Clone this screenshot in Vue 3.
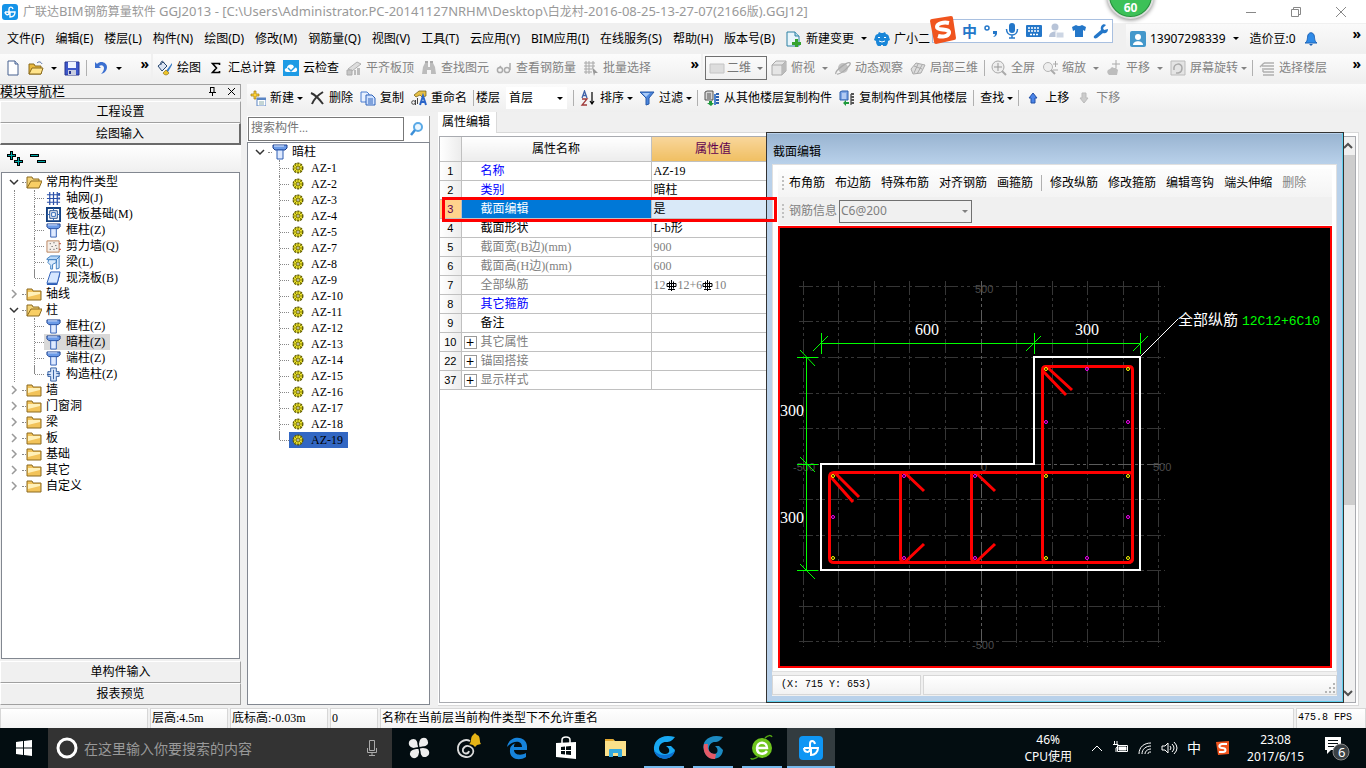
<script setup>
import { ref } from 'vue';

const title = '广联达BIM钢筋算量软件 GGJ2013 - [C:\\Users\\Administrator.PC-20141127NRHM\\Desktop\\白龙村-2016-08-25-13-27-07(2166版).GGJ12]';

// Chinese runs are set one size smaller than the Latin ones
const titleParts = title.split(/([\u4e00-\u9fa5]+)/).filter(Boolean);

const menus = ['文件(F)', '编辑(E)', '楼层(L)', '构件(N)', '绘图(D)', '修改(M)', '钢筋量(Q)', '视图(V)', '工具(T)',
    '云应用(Y)', 'BIM应用(I)', '在线服务(S)', '帮助(H)', '版本号(B)'];

// 16x16 icon bodies
const icons = {
    logo: '<rect width="16" height="16" rx="3" fill="#1593e8"/><path d="M11 5C10 2 7 3 7 5v4c0 3-4 2-4-1M3 8h10c0 3-2 5-5 5V8" fill="none" stroke="#fff" stroke-width="1.4"/>',
    file: '<path d="M3 1h7l3 3v11H3z" fill="#fff" stroke="#46608f"/><path d="M10 1v3h3" fill="#cfdcf0" stroke="#46608f"/>',
    open: '<path d="M1 14V4h5l1 2h6v8z" fill="#e9b93e" stroke="#8a6a1c"/><path d="M1 14l3-6h11l-2 6z" fill="#ffe48c" stroke="#8a6a1c"/><path d="M9 3c2-2 4-1 5 1" fill="none" stroke="#47639c"/>',
    save: '<path d="M1 2h14v13H1z" fill="#3d57c9" stroke="#27348f"/><path d="M4 2h8v6H4z" fill="#eef2ff"/><path d="M4 10h8v5H4z" fill="#c8cde0"/><path d="M5 11h2v3H5z" fill="#27348f"/>',
    undo: '<path d="M2 2v6h6L6 6c3-2 5 0 5 2s-1 4-3 6c4-1 6-4 6-7 0-4-6-7-10-3z" fill="#3b6fd0"/>',
    draw: '<path d="M1 6l5-4 4 4-5 5z" fill="#dbe4f2" stroke="#27466f"/><path d="M4 5c-1-4 2-5 3-2" fill="none" stroke="#27466f"/><path d="M15 3L9 11l2 1 4-7z" fill="#3d7fc8"/><path d="M9 10l-3 3c1 2 4 3 6 0z" fill="#edc42b" stroke="#7d6410" stroke-width=".6"/>',
    sum: '<path d="M11.500 5V3.500H4.500l4 4.500-4 4.500h7V11" fill="none" stroke="#000" stroke-width="1.600"/>',
    cloud: '<rect width="16" height="16" fill="#1e9be5"/><path d="M4 12c-3 0-3-4 0-4 0-4 6-5 7-1 4 0 4 5 1 5z" fill="#fff"/><path d="M5 8l3 3 5-5" fill="none" stroke="#1e9be5" stroke-width="1.5"/>',
    slab: '<path d="M2 9l9-7 4 2-9 7z" fill="#ddd" stroke="#b0b0b0"/><path d="M1 10h5v5H1z" fill="#c6c6c6" stroke="#aaa"/><path d="M8 10h2v5H8zM11 8h3v7h-3z" fill="#bbb"/>',
    find: '<path d="M1 14l1-7 2-4h3v4h2V3h3l2 4 1 7h-5v-4H6v4z" fill="#bcbcbc"/><path d="M4 1h3v2H4zM9 1h3v2H9z" fill="#a9a9a9"/>',
    glass: '<circle cx="4" cy="10" r="2.6" fill="none" stroke="#aaa" stroke-width="1.5"/><circle cx="11" cy="10" r="2.6" fill="none" stroke="#aaa" stroke-width="1.5"/><path d="M5 6L3 8M14 3v7" stroke="#aaa" stroke-width="1.5"/>',
    batch: '<path d="M1 3h11M1 6h11M1 9h8M1 12h8M3 1v13M6 1v13M10 1v7" stroke="#a8a8a8"/><path d="M9 7l6 6h-3l-1 3z" fill="#999"/>',
    rect: '<path d="M1 4h14v9H1z" fill="#ddd" stroke="#c4c4c4"/>',
    cube: '<path d="M1 5l4-4h10v10l-4 4H1z" fill="#e5e5e5" stroke="#aaa"/><path d="M1 5h10v10M11 5l4-4" fill="none" stroke="#aaa"/><path d="M11 5l4-4v10l-4 4z" fill="#bbb"/>',
    orbit: '<circle cx="8" cy="8" r="5" fill="#c2c2c2"/><path d="M1 14C-1 11 13 1 15 3S5 15 2 14" fill="none" stroke="#aaa" stroke-width="1.3"/>',
    part: '<path d="M1 9l5-6 9 2-4 8-8 1z" fill="#ddd" stroke="#aaa"/><path d="M4 6l8 3M8 4l-4 9M12 5l-5 9" stroke="#aaa"/>',
    full: '<circle cx="7" cy="7" r="6" fill="#eee" stroke="#aaa"/><path d="M7 3v8M3 7h8" stroke="#999"/><path d="M11 11l4 4" stroke="#aaa" stroke-width="2"/>',
    zoom: '<circle cx="6" cy="7" r="4.5" fill="#eee" stroke="#b5b5b5"/><path d="M9 10l4 4" stroke="#aaa" stroke-width="2"/><path d="M11 4h5M13.500 1v6M11 10h5" stroke="#aaa"/>',
    pan: '<path d="M3 15c-4-4 0-6 1-6l2-2 2 1 2 0 2 2-1 5z" fill="#bdbdbd"/><path d="M10 0v8M6 4h8" stroke="#aaa"/>',
    rotate: '<path d="M1 1h14v14H1z" fill="#e4e4e4" stroke="#bbb"/><path d="M4 10c-1-7 8-8 8-2s-6 5-6 5" fill="none" stroke="#aaa" stroke-width="1.5"/>',
    floors: '<path d="M5 3h10M3 6h12M5 9h10M4 12h11M4 15h11M5 3L1 7M4 12V8" stroke="#b0b0b0" stroke-width="1.4"/>',
    create: '<path d="M4 1h2v3h3v2H6v3H4V6H1V4h3z" fill="#ffd33a" stroke="#9b7a10" stroke-width=".7"/><path d="M7 8h9v8H7z" fill="#fff" stroke="#5a85c4"/><path d="M7 8h9v2H7z" fill="#5a85c4"/><path d="M9 12h5M9 14h5" stroke="#8aa"/>',
    cross: '<path d="M2 3c5 2 9 7 12 11M14 2C9 5 5 9 3 14" fill="none" stroke="#333" stroke-width="2"/>',
    copy: '<path d="M1 2h6l2 2v8H1z" fill="#e7f0ff" stroke="#4a7dd0"/><path d="M6 5h6l3 3v7H6z" fill="#cfe1ff" stroke="#2e63b8"/><path d="M8 9h5M8 11h5M8 13h5" stroke="#2e63b8"/>',
    rename: '<path d="M3 5l5-4h7v5l-4 1-2-2-4 2z" fill="#e6c045" stroke="#6b570f" stroke-width=".7"/><path d="M9 15l3-9 3 9M10 12h4" fill="none" stroke="#2b65c8" stroke-width="2"/><circle cx="2.500" cy="12.500" r="1.800" fill="none" stroke="#444"/><path d="M4.500 10v5M6.500 8v6" fill="none" stroke="#444"/>',
    sort: '<path d="M2 8l2.500-7L7 8M3 5.500h3" fill="none" stroke="#3f62a8" stroke-width="1.300"/><path d="M2 9h5l-5 6h5" fill="none" stroke="#a03a3a" stroke-width="1.300"/><path d="M12 2v11M10 11l2 3 2-3" fill="none" stroke="#000" stroke-width="1.200"/>',
    filter: '<path d="M1 2h14l-5 6v6l-3 1V8z" fill="#4b86dd" stroke="#2759a8"/><path d="M3 3h8L7 7z" fill="#a9cbf8"/>',
    fromFloor: '<path d="M1 2l2-1h6v9H1z" fill="#d5d5d5" stroke="#555"/><path d="M3 4h4M3 6h4M3 8h4" stroke="#555"/><path d="M5 11h3v2h2l-3 3-4-3h2z" fill="#1e9a3b"/><path d="M11 4v11" stroke="#4b83d0" stroke-width="2"/><path d="M12 4h3M12 7h3M12 10h3M12 13h3" stroke="#2e60ac" stroke-width="2"/>',
    toFloor: '<path d="M1 2l2-1h6v9H1z" fill="#7ea6e6" stroke="#2e60ac"/><path d="M3 4h4M3 6h4M3 8h4" stroke="#e6efff"/><path d="M4 13l3-3v2h3v2H7v2z" fill="#1e9a3b"/><path d="M12 4v11" stroke="#888" stroke-width="2"/><path d="M12 4h3M12 7h3M12 10h3M12 13h3" stroke="#555" stroke-width="2"/>',
    up: '<path d="M8 3l4 5h-2v5H6V8H4z" fill="#4a84e8" stroke="#2350a5"/>',
    down: '<path d="M8 13l4-5h-2V3H6v5H4z" fill="#ccc" stroke="#bbb"/>',
    change: '<path d="M1 1h8l4 4v10H1z" fill="#e8f5fb" stroke="#2c80a3"/><path d="M9 1v4h4" fill="#b5dcea" stroke="#2c80a3"/><path d="M9 8h3v3h3v3h-3v2H9v-2H6v-3h3z" fill="#35a32f"/>',
    robot: '<path d="M1 6c0-2 2-3 3-3l1-2 2 1h2l2-1 1 2c1 0 3 1 3 3l1 3-2 1c0 3-1 4-2 5h-3v-1H7v1H4c-1-1-2-2-2-5L0 9z" fill="#1986d8"/><path d="M4 7q1-2 2 0M10 7q1-2 2 0M5 10q3 2 6 0" stroke="#fff" fill="none"/>',
    user: '<rect width="16" height="16" rx="2" fill="#4498cb"/><circle cx="8" cy="6" r="3" fill="#fff"/><path d="M3 14c0-5 10-5 10 0z" fill="#fff"/>',
    bell: '<path d="M2 12c3-2 2-5 3-8 1-3 5-3 6 0 1 3 0 6 3 8z" fill="#2f8be8" stroke="#1d62b5"/><path d="M6 13h4l-2 2z" fill="#1d62b5"/>',
    folder: '<path d="M1 3h5l1 2h8v9H1z" fill="#f2c35a" stroke="#8c6b20"/><path d="M2 6h12v2L2 11z" fill="#fff0b8"/>',
    folderOpen: '<path d="M1 14V3h5l1 2h6v3" fill="#f4d479" stroke="#8c6b20"/><path d="M1 14l4-7h11l-3 7z" fill="#f8ce64" stroke="#8c6b20"/>',
    grid: '<path d="M1 4h14M1 8h12M1 12h14M4 1v14M8 1v14M12 1v14" stroke="#2a4fa8" stroke-width="1.300"/><path d="M13 2h2v3h-2zM13 7h2v2h-2z" fill="#2a4fa8"/>',
    raft: '<path d="M1 1h14v14H1z" fill="#fff" stroke="#123f80" stroke-width="2"/><path d="M4 4h8v8H4z" fill="none" stroke="#123f80"/><path d="M6 6h4v4H6zM8 1v3M8 12v3M1 8h3M12 8h3" fill="none" stroke="#2a63b4"/>',
    column: '<path d="M1 1h14v3l-2 2H3L1 4z" fill="#6b9be8" stroke="#1d3f8b"/><path d="M5 6h6v9H5z" fill="#dfeaff" stroke="#2d5cb3"/><path d="M2 2h10" stroke="#dfeaff"/>',
    wall: '<path d="M1 2h13v12H1z" fill="#f5efe9" stroke="#b9825a"/><path d="M4 5h1M8 4h1M6 8h1M10 7h1M4 11h1M8 11h1M11 10h1" stroke="#333"/><path d="M14 5h2M14 11h2" stroke="#c0392b"/>',
    beam: '<path d="M1 4l4-3h10l-4 4H1z" fill="#b7d7f7" stroke="#3f7fc0"/><path d="M3 5l8 0v3l-4 2v5H5v-4L2 8zM11 5l3-3v12l-3 1z" fill="#d9ebfd" stroke="#3f7fc0"/>',
    slabBlue: '<path d="M5 1h10l-3 12H1z" fill="#d6e7ff" stroke="#2b5db8"/><path d="M1 13h11l3-12v3l-3 11H1z" fill="#2b5db8"/>',
    tie: '<path d="M2 5h3V1h6v4h3v5h-3v5H5v-5H2z" fill="#d9e6fa" stroke="#2d5a9e"/><path d="M8 3v10M11 7h4M1 8h4" stroke="#2d5a9e"/>',
    gear: '<circle cx="8" cy="8" r="5.500" fill="#eee52a" stroke="#5c5800" stroke-width="1.500" stroke-dasharray="2.500 1"/><path d="M8 3v10M3 8h10M4.500 4.500l7 7M11.500 4.500l-7 7" stroke="#5c5800" stroke-width=".8"/><circle cx="8" cy="8" r="1.500" fill="#fff" stroke="#5c5800" stroke-width=".8"/>'
};

const drawTools = [
    { text: '绘图', icon: 'draw' },
    { text: '汇总计算', icon: 'sum' },
    { text: '云检查', icon: 'cloud' },
    { text: '平齐板顶', icon: 'slab', off: true },
    { text: '查找图元', icon: 'find', off: true },
    { text: '查看钢筋量', icon: 'glass', off: true },
    { text: '批量选择', icon: 'batch', off: true }
];

const viewTools = [
    { text: '俯视', icon: 'cube', arrow: true },
    { text: '动态观察', icon: 'orbit' },
    { text: '局部三维', icon: 'part', sep: true },
    { text: '全屏', icon: 'full' },
    { text: '缩放', icon: 'zoom', arrow: true },
    { text: '平移', icon: 'pan', arrow: true },
    { text: '屏幕旋转', icon: 'rotate', arrow: true, tight: true, sep: true },
    { text: '选择楼层', icon: 'floors' }
];

const componentTools = [
    { text: '新建', icon: 'create', arrow: true },
    { text: '删除', icon: 'cross' },
    { text: '复制', icon: 'copy' },
    { text: '重命名', icon: 'rename', sep: true }
];

const floorTools = [
    { text: '排序', icon: 'sort', arrow: true },
    { text: '过滤', icon: 'filter', arrow: true, sep: true },
    { text: '从其他楼层复制构件', icon: 'fromFloor' },
    { text: '复制构件到其他楼层', icon: 'toFloor', sep: true },
    { text: '查找', arrow: true, sep: true },
    { text: '上移', icon: 'up' },
    { text: '下移', icon: 'down', off: true }
];

const navTree = ref([
    {
        text: '常用构件类型', open: true, children: [
            { text: '轴网(J)', icon: 'grid' },
            { text: '筏板基础(M)', icon: 'raft' },
            { text: '框柱(Z)', icon: 'column' },
            { text: '剪力墙(Q)', icon: 'wall' },
            { text: '梁(L)', icon: 'beam' },
            { text: '现浇板(B)', icon: 'slabBlue' }
        ]
    },
    { text: '轴线' },
    {
        text: '柱', open: true, children: [
            { text: '框柱(Z)', icon: 'column' },
            { text: '暗柱(Z)', icon: 'column', active: true },
            { text: '端柱(Z)', icon: 'column' },
            { text: '构造柱(Z)', icon: 'tie' }
        ]
    },
    { text: '墙' },
    { text: '门窗洞' },
    { text: '梁' },
    { text: '板' },
    { text: '基础' },
    { text: '其它' },
    { text: '自定义' }
]);

const components = [1, 2, 3, 4, 5, 7, 8, 9, 10, 11, 12, 13, 14, 15, 16, 17, 18, 19].map(n => `AZ-${n}`);
const selected = ref('AZ-19');

const properties = [
    { no: 1, name: '名称', value: 'AZ-19', kind: 'key' },
    { no: 2, name: '类别', value: '暗柱', kind: 'key' },
    { no: 3, name: '截面编辑', value: '是', kind: 'current' },
    { no: 4, name: '截面形状', value: 'L-b形', kind: '' },
    { no: 5, name: '截面宽(B边)(mm)', value: '900', kind: 'dim' },
    { no: 6, name: '截面高(H边)(mm)', value: '600', kind: 'dim' },
    { no: 7, name: '全部纵筋', bars: ['12', '12+6', '10'], kind: 'dim' },
    { no: 8, name: '其它箍筋', value: '', kind: 'key' },
    { no: 9, name: '备注', value: '', kind: '' },
    { no: 10, name: '其它属性', value: '', kind: 'dim', group: true },
    { no: 22, name: '锚固搭接', value: '', kind: 'dim', group: true },
    { no: 37, name: '显示样式', value: '', kind: 'dim', group: true }
];

const barTools = ['布角筋', '布边筋', '特殊布筋', '对齐钢筋', '画箍筋'];
const editTools = ['修改纵筋', '修改箍筋', '编辑弯钩', '端头伸缩'];

// Section drawing
const gridX = [803, 838, 874, 909, 945, 1016, 1052, 1087, 1123, 1158];
const gridY = [286, 321, 357, 393, 428, 499, 535, 570, 606, 641];
const cornerBars = [[1046, 369], [1128, 369], [833, 476], [1046, 476], [1128, 476], [833, 558], [1046, 558], [1128, 558]];
const sideBars = [[1087, 369], [1046, 422], [1128, 422], [904, 476], [975, 476], [833, 517], [1128, 517], [904, 558], [975, 558], [1087, 558]];
</script>

<template>
    <div class="app">
        <header class="titlebar">
            <svg class="ico" viewBox="0 0 16 16" v-html="icons.logo" />
            <h1><span v-for="(p, i) in titleParts" :key="i" :class="{ han: /[\u4e00-\u9fa5]/.test(p) }">{{ p }}</span></h1>
            <div class="window-buttons">
                <button><svg viewBox="0 0 10 10"><path d="M0 5.500h10" /></svg></button>
                <button><svg viewBox="0 0 10 10"><path d="M.5 2.500h7v7h-7zM2.500 2.500v-2h7v7h-2" /></svg></button>
                <button><svg viewBox="0 0 10 10"><path d="M0 0l10 10M10 0L0 10" /></svg></button>
            </div>
        </header>

        <nav class="menubar">
            <button v-for="m in menus" :key="m">{{ m }}</button>
            <button class="tool"><svg class="ico" viewBox="0 0 16 16" v-html="icons.change" />新建变更<i class="arrow" /></button>
            <button class="tool"><svg class="ico" viewBox="0 0 16 16" v-html="icons.robot" />广小二</button>
            <div class="account">
                <button class="tool"><svg class="ico" viewBox="0 0 16 16" v-html="icons.user" />13907298339<i class="arrow" /></button>
                <button class="tool beans">造价豆:0<svg class="ico" viewBox="0 0 16 16" v-html="icons.bell" /></button>
                <button class="more">»</button>
            </div>
        </nav>

        <div class="toolbars">
            <div class="strip file-strip">
                <button><svg class="ico" viewBox="0 0 16 16" v-html="icons.file" /></button>
                <button class="tool"><svg class="ico" viewBox="0 0 16 16" v-html="icons.open" /><i class="arrow" /></button>
                <button><svg class="ico" viewBox="0 0 16 16" v-html="icons.save" /></button>
                <i class="sep" />
                <button class="tool"><svg class="ico" viewBox="0 0 16 16" v-html="icons.undo" /><i class="arrow" /></button>
                <button class="more">»</button>
            </div>
            <div class="strip draw-strip">
                <button v-for="t in drawTools" :key="t.text" class="tool" :class="{ off: t.off }">
                    <svg class="ico" viewBox="0 0 16 16" v-html="icons[t.icon]" />{{ t.text }}
                </button>
                <button class="more">»</button>
            </div>
            <div class="strip view-strip">
                <label class="mode">
                    <svg class="ico" viewBox="0 0 16 16" v-html="icons.rect" />
                    <select aria-label="二维"><option>二维</option></select>
                    <i class="arrow" />
                </label>
                <template v-for="t in viewTools" :key="t.text">
                    <button class="tool off">
                        <svg class="ico" viewBox="0 0 16 16" v-html="icons[t.icon]" />{{ t.text }}<i v-if="t.arrow" class="arrow" :class="{ tight: t.tight }" />
                    </button>
                    <i v-if="t.sep" class="sep" />
                </template>
                <button class="more">»</button>
            </div>
        </div>

        <main class="workspace">
            <aside class="navigator">
                <div class="nav-title"><span>模块导航栏</span>
                    <svg viewBox="0 0 9 9"><path d="M2.500 0v5M1 5.500h7M6 0v5M2 .5h4M4.500 5v4" /></svg>
                    <svg viewBox="0 0 9 9"><path d="M1 1l7 7M8 1L1 8" /></svg>
                </div>
                <button class="section">工程设置</button>
                <button class="section pressed">绘图输入</button>
                <div class="nav-tools">
                    <button><svg width="17" height="16" viewBox="0 0 17 16"><path d="M0 4.500h9M4.500 0v9M7 10.500h9M11.500 6v9" stroke="#000" stroke-width="3" /><path d="M1 4.500h7M4.500 1v7M8 10.500h7M11.500 7v7" stroke="#0aa" /></svg></button>
                    <button><svg width="17" height="16" viewBox="0 0 17 16"><path d="M0 4.500h9M7 10.500h9" stroke="#000" stroke-width="3" /><path d="M1 4.500h7M8 10.500h7" stroke="#0aa" /></svg></button>
                </div>
                <ul class="tree nav-tree">
                    <li v-for="g in navTree" :key="g.text" :class="{ open: g.open }">
                        <button class="node" @click="g.open = !g.open">
                            <svg class="chevron" viewBox="0 0 10 10"><path :d="g.open ? 'M1 3l4 4 4-4' : 'M3 1l4 4-4 4'" /></svg>
                            <i class="stub" />
                            <svg class="ico" viewBox="0 0 16 16" v-html="g.open ? icons.folderOpen : icons.folder" />
                            <span>{{ g.text }}</span>
                        </button>
                        <ul v-if="g.open && g.children">
                            <li v-for="c in g.children" :key="c.text">
                                <button class="leaf" :class="{ active: c.active }">
                                    <svg class="ico" viewBox="0 0 16 16" v-html="icons[c.icon]" />
                                    <span>{{ c.text }}</span>
                                </button>
                            </li>
                        </ul>
                    </li>
                </ul>
                <button class="section">单构件输入</button>
                <button class="section">报表预览</button>
            </aside>

            <div class="editor">
                <div class="strip component-strip">
                    <template v-for="t in componentTools" :key="t.text">
                        <button class="tool">
                            <svg class="ico" viewBox="0 0 16 16" v-html="icons[t.icon]" />{{ t.text }}<i v-if="t.arrow" class="arrow tight" />
                        </button>
                        <i v-if="t.sep" class="sep" />
                    </template>
                    <label class="floor">楼层
                        <span class="floor-box"><select><option>首层</option></select><i class="arrow" /></span>
                    </label>
                    <i class="sep" />
                    <template v-for="t in floorTools" :key="t.text">
                        <button class="tool" :class="{ off: t.off }">
                            <svg v-if="t.icon" class="ico" viewBox="0 0 16 16" v-html="icons[t.icon]" />{{ t.text }}<i v-if="t.arrow" class="arrow tight" />
                        </button>
                        <i v-if="t.sep" class="sep" />
                    </template>
                </div>

                <div class="panes">
                    <section class="components">
                        <div class="search">
                            <input type="text" placeholder="搜索构件..." aria-label="搜索构件" />
                            <button><svg class="ico" viewBox="0 0 16 16"><circle cx="9" cy="6" r="4" fill="#eaf6ff" stroke="#5aa9e6" stroke-width="2" /><path d="M6 9l-4 5" stroke="#3c8fd8" stroke-width="2.500" /></svg></button>
                        </div>
                        <ul class="tree component-tree">
                            <li>
                                <button class="node">
                                    <svg class="chevron" viewBox="0 0 10 10"><path d="M1 3l4 4 4-4" /></svg>
                                    <i class="stub" />
                                    <svg class="ico" viewBox="0 0 16 16" v-html="icons.column" />
                                    <span>暗柱</span>
                                </button>
                                <ul>
                                    <li v-for="c in components" :key="c">
                                        <button class="leaf" :class="{ chosen: c === selected }" @click="selected = c">
                                            <svg class="ico" viewBox="0 0 16 16" v-html="icons.gear" />
                                            <span>{{ c }}</span>
                                        </button>
                                    </li>
                                </ul>
                            </li>
                        </ul>
                    </section>

                    <section class="properties">
                        <button class="tab">属性编辑</button>
                        <div class="sheet">
                            <div class="table-box">
                                <table>
                                    <thead>
                                        <tr><th class="no"></th><th class="name">属性名称</th><th class="value">属性值</th><th></th></tr>
                                    </thead>
                                    <tbody>
                                        <tr v-for="p in properties" :key="p.no" :class="p.kind">
                                            <td class="no">{{ p.no }}</td>
                                            <td class="name"><button v-if="p.group" class="expand">+</button>{{ p.name }}</td>
                                            <td class="value">
                                                <template v-if="p.bars">
                                                    <template v-for="(b, i) in p.bars" :key="i">
                                                        <svg v-if="i" class="rebar" viewBox="0 0 11 11"><path d="M5.500 0v11M2 9.500h7M1 3.500h9v3H1zM3.500 1.500v7M7.500 1.500v7" /></svg>{{ b }}
                                                    </template>
                                                </template>
                                                <template v-else>{{ p.value }}</template>
                                            </td>
                                            <td></td>
                                        </tr>
                                    </tbody>
                                </table>
                                <div class="scrollbar">
                                    <svg viewBox="0 0 10 10"><path d="M1 7l4-4 4 4" /></svg>
                                    <i class="thumb" />
                                    <svg viewBox="0 0 10 10"><path d="M1 3l4 4 4-4" /></svg>
                                </div>
                            </div>
                        </div>

                        <div class="dialog">
                            <h2>截面编辑</h2>
                            <div class="dialog-body">
                                <div class="dialog-tools">
                                    <i class="grip" />
                                    <button v-for="t in barTools" :key="t">{{ t }}</button>
                                    <i class="sep" />
                                    <button v-for="t in editTools" :key="t">{{ t }}</button>
                                    <button class="off">删除</button>
                                </div>
                                <div class="dialog-tools info">
                                    <i class="grip" />
                                    <label for="rebar">钢筋信息</label>
                                    <span class="combo"><select id="rebar"><option>C6@200</option></select><i class="arrow" /></span>
                                </div>
                                <div class="canvas">
                                    <svg width="550" height="438" viewBox="780 228 550 438">
                                        <g class="grid">
                                            <path v-for="x in gridX" :key="'x' + x" :d="`M${x}.5 281V647`" />
                                            <path v-for="y in gridY" :key="'y' + y" :d="`M799 ${y}.5H1165`" />
                                            <path class="axis" d="M981.500 281V647M799 464.500H1165" />
                                        </g>
                                        <g class="scale">
                                            <text x="975" y="293">500</text>
                                            <text x="972" y="649">-500</text>
                                            <text x="981" y="471">0</text>
                                            <text x="1153" y="471">500</text>
                                            <text x="793" y="471">-500</text>
                                        </g>
                                        <g class="dims">
                                            <path d="M821 343.500H1140M821.500 333v21M1034.500 333v21M1140.500 333v21M813 351l15-15M1026 351l15-15M1133 351l15-15" />
                                            <path d="M806.500 357V570M797 357.500h21M797 464.500h21M797 570.500h21M800 350l15 16M800 457l15 15M800 564l15 15" />
                                        </g>
                                        <path class="outline" d="M821 464H1034V357H1140V570H821z" />
                                        <path class="leader" d="M1141 356L1178 319" />
                                        <g class="stirrup">
                                            <path d="M1042.500 558V370q0-3.500 3.500-3.500h83q3.500 0 3.500 3.500v188q0 4.500-4.500 4.500h-81q-4 0-4.500-4.500" />
                                            <path d="M829.500 558V477q0-4.500 4.500-4.500h296q2.500 0 2.500 4.500v81q0 4.500-4.500 4.500H834q-4.500 0-4.500-4.500" />
                                            <path d="M900.500 474v85q1 3 4 3M971.500 474v85q1 3 4 3" />
                                            <path d="M830 476l23 26M835 473l24 24M1043 371l23 24M1047 367l25 23" />
                                            <path d="M905 473l19 18M905 562l19-18M976 473l19 18M976 562l19-18" />
                                        </g>
                                        <circle v-for="(b, i) in cornerBars" :key="'c' + i" class="corner-bar" :cx="b[0]" :cy="b[1]" r="1.500" />
                                        <circle v-for="(b, i) in sideBars" :key="'s' + i" class="side-bar" :cx="b[0]" :cy="b[1]" r="1.500" />
                                        <g class="labels">
                                            <text x="915" y="335">600</text>
                                            <text x="1075" y="335">300</text>
                                            <text x="780" y="416">300</text>
                                            <text x="780" y="523">300</text>
                                            <text class="cjk" x="1178" y="325">全部纵筋</text>
                                            <text class="green" x="1242" y="325">12C12+6C10</text>
                                        </g>
                                    </svg>
                                </div>
                            </div>
                            <div class="dialog-status">
                                <span class="coords">(X: 715 Y: 653)</span>
                                <span class="rest"><svg width="11" height="11" viewBox="0 0 11 11"><path d="M8 0h2v2H8zM4 4h2v2H4zM8 4h2v2H8zM0 8h2v2H0zM4 8h2v2H4zM8 8h2v2H8z" fill="#b5b5b5" /></svg></span>
                            </div>
                        </div>
                        <div class="marker" />
                    </section>
                </div>
            </div>
        </main>

        <footer class="statusbar">
            <span class="blank"></span>
            <span class="height">层高:4.5m</span>
            <span class="base">底标高:-0.03m</span>
            <span class="count">0</span>
            <span class="hint">名称在当前层当前构件类型下不允许重名</span>
            <span class="fps">475.8 FPS</span>
        </footer>

        <div class="taskbar">
            <button class="start"><svg width="16" height="16" viewBox="0 0 16 16"><path d="M0 2l7-1v6.500H0zM8 1l8-1v7.500H8zM0 8.500h7V15l-7-1zM8 8.500h8V16l-8-1z" fill="#fff" /></svg></button>
            <div class="cortana">
                <svg width="22" height="22" viewBox="0 0 22 22"><circle cx="11" cy="11" r="9" fill="none" stroke="#fff" stroke-width="3" /></svg>
                <input type="text" placeholder="在这里输入你要搜索的内容" aria-label="在这里输入你要搜索的内容" />
                <svg width="12" height="18" viewBox="0 0 12 18"><path d="M3.500 1.500h5v10h-5zM1.500 9v4.500h9V9M6 13.500V17M3 16.500h6" fill="none" stroke="#aaa" /></svg>
            </div>
            <div class="apps">
                <button><svg viewBox="0 0 24 24"><g fill="#eee" stroke="#030d11" stroke-width="1.500"><path d="M12 12C7 14 1 12 1 7c0-4 5-6 8-4 2 2 3 5 3 9z" /><path d="M12 12c-2-5 0-11 5-11 4 0 6 5 4 8-2 2-5 3-9 3z" /><path d="M12 12c5-2 11 0 11 5 0 4-5 6-8 4-2-2-3-5-3-9z" /><path d="M12 12c2 5 0 11-5 11-4 0-6-5-4-8 2-2 5-3 9-3z" /></g></svg></button>
                <button><svg viewBox="0 0 24 24"><path d="M14 5C8 2 1 7 2 14s12 10 15 3c2-6-7-10-10-4-1 5 5 6 6 2" fill="none" stroke="#ddd" stroke-width="1.800" /><path d="M13 8c3-1 1-7 4-9l2-2 2 2c4 1 2 7 4 9l-4 1-2 2-2-2z" fill="#e6b416" /></svg></button>
                <button><svg viewBox="0 0 24 24"><path d="M2 11C4-1 21-1 22 10v4H9c0 5 7 6 12 3v4C13 26 4 22 5 14c0-4 3-6 6-7-2 1-2 2-2 4h8c0-7-9-7-15 0z" fill="#1683dc" /></svg></button>
                <button><svg viewBox="0 0 24 24"><path d="M8 7V4c0-4 8-4 8 0v3" fill="none" stroke="#fff" stroke-width="1.500" /><path d="M2 7l20-1v17L2 21z" fill="#fff" /><path d="M7 11l4-.5V14H7zM12 10.500l5-.5v4h-5zM7 15h4v3.500L7 18zM12 15h5v4l-5-.5z" fill="#030d11" /></svg></button>
                <button><svg viewBox="0 0 24 24"><path d="M2 3h8l2 2h11v15H2z" fill="#fbe08a" /><path d="M2 3h8l1 2H2z" fill="#e3a82f" /><path d="M6 21v-7q0-1 1-1h11q1 0 1 1v7h-4v-4h-5v4z" fill="#35a9dd" /></svg></button>
                <button class="running"><svg viewBox="0 0 24 24"><path d="M23 1C9-3 1 5 2 14c2 11 19 12 21 0l-4-4h-5c5 3 4 8-1 8-9-1-7-12 1-12 4 0 6-1 9-5z" fill="#18a8f2" /><path d="M2 14c2 11 19 12 21 0-2 5-16 8-21 0z" fill="#0c6fd0" /></svg></button>
                <button class="running"><svg viewBox="0 0 24 24"><path d="M22 1C9-3 0 5 3 14c2 11 18 12 19 0l-4-4h-4c4 3 3 8-1 8-8-1-6-12 1-12 3 0 5-1 8-5z" fill="#1c8ac2" /><path d="M3 8c-2 9 4 16 11 15l1-5C8 18 6 13 7 8z" fill="#e55a67" /></svg></button>
                <button class="running"><svg viewBox="0 0 24 24"><circle cx="12" cy="12" r="10" fill="#6fc51e" /><path d="M7 12h10c0-7-10-7-10 0s7 7 10 3" fill="none" stroke="#fff" stroke-width="2.500" /><path d="M1 22c0 2 4 1 8-2M15 2c3-3 6-3 7-1" stroke="#52a313" stroke-width="1.500" fill="none" /></svg></button>
                <button class="running current"><svg viewBox="0 0 24 24"><rect width="24" height="24" rx="4" fill="#0f96f4" /><path d="M16 8c-1-4-5-4-5 0v5c0 4-6 4-6-1M5 12h14c0 4-3 7-7 7v-7" fill="none" stroke="#fff" stroke-width="2" /></svg></button>
            </div>
            <div class="tray">
                <div class="pair">46%<br />CPU使用</div>
                <svg width="12" height="16" viewBox="0 0 12 16"><path d="M1 11l5-5 5 5" /></svg>
                <svg width="17" height="16" viewBox="0 0 17 16"><path d="M5.500 5.500h10v6h-10zM2.500 1v3M5 1v3M1 4.500h5v2L4 8v4" /><path d="M7 7h7v3H7z" fill="#fff" /></svg>
                <svg width="14" height="16" viewBox="0 0 14 16"><path d="M1 14C1 7 6 3 13 3M4 14c0-5 4-8 9-8M7 14c0-3 3-5 6-5M10 14c0-2 1-2 3-2" /></svg>
                <svg width="17" height="16" viewBox="0 0 17 16"><path d="M1 6h3l3-3v10l-3-3H1zM9 6q2 2 0 4M11 4q4 4 0 8M13 2q6 6 0 12" /></svg>
                <span class="ime-lang">中</span>
                <svg class="sogou" width="16" height="16" viewBox="0 0 16 16"><path d="M1 2l13-1v13L3 15z" fill="#f0541e" stroke="none" /><path d="M12 4H7C3 5 4 8 7 8c5 0 4 4 1 4H4" stroke-width="2" /></svg>
                <div class="pair clock">23:08<br />2017/6/15</div>
                <svg class="notice" width="28" height="26" viewBox="0 0 28 26"><path d="M2 2h16v13H8l-4 4v-4H2z" fill="#fff" stroke="none" /><path d="M5 5.500h10M5 8.500h10M5 11.500h6" stroke="#030d11" /><circle cx="18" cy="17" r="8" fill="#3a4145" stroke="#888" /><text x="15" y="22">6</text></svg>
            </div>
        </div>

        <div class="ime">
            <svg class="ime-logo" width="30" height="30" viewBox="0 0 30 30"><path d="M2 5q0-2 2-2l19-3q2 0 2 2l3 20q0 2-2 2L8 28q-2 0-2-2z" fill="#f0541e" /><path d="M21 7c-5-1-12 0-12 4s13 1 12 6c-1 4-8 4-11 3" fill="none" stroke="#fff" stroke-width="4" /></svg>
            <span>中</span>
            <svg width="14" height="16" viewBox="0 0 14 16"><circle cx="3" cy="5" r="2" fill="none" stroke="#2477c9" stroke-width="1.500" /><path d="M9 8h4v3q-1 3-4 3 2-1 2-3H9z" fill="#2477c9" /></svg>
            <svg width="14" height="16" viewBox="0 0 14 16"><rect x="4" y="0" width="6" height="10" rx="3" fill="#2477c9" /><path d="M1.500 6c0 8 11 8 11 0M7 12v3M4 15h6" fill="none" stroke="#2477c9" stroke-width="1.500" /></svg>
            <svg width="16" height="16" viewBox="0 0 16 16"><rect y="2" width="16" height="12" rx="1" fill="#2477c9" /><path d="M2 5h12M2 8h12M4 11.500h8" stroke="#fff" stroke-width="1.500" stroke-dasharray="2 1" /></svg>
            <svg width="16" height="16" viewBox="0 0 16 16"><circle cx="6" cy="4" r="3.500" fill="#b8c4d8" /><path d="M0 14c0-7 11-7 12-2v2z" fill="#b8c4d8" /><path d="M7 9h8v6H7z" fill="#cdd6e4" stroke="#fff" /></svg>
            <svg width="14" height="16" viewBox="0 0 14 16"><path d="M4 2q3 2 6 0l4 2-1 4-2-1v7H3V7L1 8 0 4z" fill="#2477c9" /></svg>
            <svg width="15" height="16" viewBox="0 0 15 16"><path d="M1 13l7-6c-1-4 2-7 5-5l-3 3 1 2 4-1c0 4-3 5-5 4l-6 5c-2 1-4 0-3-2z" fill="#2477c9" /></svg>
        </div>
        <div class="boost">60</div>
    </div>
</template>

<style>
body {
    margin: 0;
}
</style>

<style scoped>
.app {
    position: relative;
    display: flex;
    flex-direction: column;
    min-height: 100vh;
    overflow: hidden;
    background: #f0f0f0;
    color: #000;
    font: 12px/16px "Noto Sans", "Noto Sans CJK SC", sans-serif;
}

.app * {
    box-sizing: border-box;
}

button,
select,
input {
    margin: 0;
    padding: 0;
    border: 0;
    border-radius: 0;
    background: none;
    color: inherit;
    font: inherit;
    white-space: nowrap;
}

select {
    appearance: none;
    outline: 0;
}

ul {
    margin: 0;
    padding: 0;
    list-style: none;
}

.ico {
    flex: none;
    display: block;
    width: 16px;
    height: 16px;
}

.tool {
    display: flex;
    flex: none;
    align-items: center;
    gap: 4px;
}

.off {
    color: #838383;
}

.arrow {
    flex: none;
    margin-left: 3px;
    border: 3px solid transparent;
    border-top-color: currentColor;
    border-bottom: 0;
}

.arrow.tight {
    margin: 0 -1px;
}

.sep {
    flex: none;
    width: 1px;
    height: 16px;
    margin: 0 -1px;
    background: #b0b0b0;
}

.more {
    flex: none;
    align-self: flex-start;
    margin-left: auto;
    font-size: 14px;
    line-height: 20px;
    font-weight: 700;
}

/* title bar */
.titlebar {
    display: flex;
    align-items: center;
    gap: 5px;
    height: 23px;
    padding-left: 2px;
    background: #fff;
    color: #999;
}

h1,
h2 {
    margin: 0;
    font-size: 12px;
    font-weight: 400;
    white-space: nowrap;
}

h1 {
    font-size: 13px;
}

.han {
    font-size: 12px;
}

.window-buttons {
    display: flex;
    gap: 35px;
    margin-left: auto;
    padding-right: 20px;
}

.window-buttons svg {
    display: block;
    width: 10px;
    height: 10px;
    fill: none;
    stroke: #888;
}

/* menus and tool strips */
.menubar {
    display: flex;
    align-items: center;
    gap: 11px;
    height: 31px;
    padding-left: 7px;
    overflow: hidden;
}

.menubar > button {
    flex: none;
}

.menubar > .tool + .tool {
    margin-left: -4px;
}

.account {
    display: flex;
    flex: none;
    align-items: center;
    gap: 11px;
    width: 240px;
    height: 29px;
    margin-left: auto;
    padding: 0 5px 0 4px;
    background: linear-gradient(#fafafa, #efefef);
}

.beans {
    gap: 7px;
}

.toolbars {
    display: flex;
    gap: 2px;
    height: 30px;
}

.strip {
    display: flex;
    align-items: center;
    gap: 7px;
    height: 28px;
    overflow: hidden;
    background: linear-gradient(#fcfcfc, #efefef);
}

.file-strip {
    flex: none;
    width: 151px;
    padding: 0 2px 0 5px;
}

.draw-strip {
    flex: none;
    width: 548px;
    padding: 0 2px 0 4px;
}

.view-strip {
    flex: 1;
    padding: 0 5px 0 2px;
}

.mode {
    display: flex;
    flex: none;
    align-items: center;
    width: 62px;
    height: 24px;
    margin-right: -3px;
    padding: 0 3px;
    border: 1px solid #707070;
    color: #777;
}

.mode select {
    flex: 1;
    width: 26px;
    padding-left: 2px;
}

/* left navigator */
.workspace {
    display: flex;
    flex: 1;
    gap: 6px;
}

.navigator {
    display: flex;
    flex: none;
    flex-direction: column;
    width: 241px;
    padding-bottom: 1px;
}

.navigator,
.components,
.properties,
.statusbar {
    font-family: "Liberation Serif", "Noto Sans CJK SC", serif;
}

.nav-title {
    display: flex;
    align-items: center;
    gap: 10px;
    height: 15px;
    margin-bottom: 2px;
    padding-right: 4px;
    border: 1px solid #a0a0a0;
    border-left: 0;
    line-height: 13px;
}

.nav-title span {
    flex: 1;
    font-size: 13px;
}

.nav-title svg {
    width: 9px;
    height: 9px;
    fill: none;
    stroke: #000;
}

.section {
    flex: none;
    height: 22px;
    border: 1px solid #a0a0a0;
    border-top-color: #fff;
    border-left-color: #fff;
    line-height: 20px;
}

.section.pressed {
    border-right: 2px solid #6b6b6b;
    border-bottom: 2px solid #6b6b6b;
}

.nav-tools {
    display: flex;
    align-items: center;
    gap: 6px;
    height: 27px;
    padding-left: 7px;
    background: linear-gradient(#fff, #efefef);
}

.nav-tools svg {
    display: block;
}

.tree {
    flex: 1;
    background: #fff;
    border: 1px solid #828790;
}

.nav-tree {
    margin: 0 1px 2px;
    padding: 1px 0;
}

.node,
.leaf {
    display: flex;
    align-items: center;
    height: 16px;
    line-height: 16px;
    text-align: left;
}

.node {
    padding-left: 7px;
}

.chevron {
    width: 10px;
    height: 10px;
    fill: none;
    stroke: #999;
    stroke-width: 1.5;
}

.open .chevron,
.component-tree .chevron {
    stroke: #333;
}

.stub {
    width: 4px;
    margin: 0 0 0 3px;
    border-top: 1px dotted #888;
}

.node span {
    margin-left: 4px;
}

.nav-tree ul {
    margin-left: 12px;
    padding-left: 19px;
    border-left: 1px dotted #888;
}

.tree ul li {
    display: flex;
    align-items: center;
    border-left: 1px dotted #888;
}

.tree ul li:last-child {
    border-image: linear-gradient(#888 50%, transparent 50%) 1;
}

.tree ul li::before {
    content: "";
    width: 9px;
    border-top: 1px dotted #888;
}

.leaf {
    padding: 0 5px 0 2px;
}

.leaf .ico {
    width: 15px;
    height: 15px;
}

.leaf span {
    margin-left: 5px;
}

.leaf.active {
    background: #d9d9d9;
}

.leaf.chosen {
    background: #3267c3;
}

/* right part */
.editor {
    display: flex;
    flex: 1;
    flex-direction: column;
    min-width: 0;
}

.component-strip {
    padding-left: 3px;
}

.floor {
    display: flex;
    flex: none;
    align-items: center;
    gap: 6px;
    margin-left: -4px;
}

.floor-box {
    display: flex;
    align-items: center;
    width: 61px;
    height: 22px;
    padding: 0 4px 0 3px;
    background: #fff;
}

.floor-box select,
.combo select {
    flex: 1;
    min-width: 0;
}

.panes {
    display: flex;
    flex: 1;
    gap: 8px;
}

.components {
    display: flex;
    flex: none;
    flex-direction: column;
    width: 183px;
    padding: 4px 0 1px;
}

.search {
    display: flex;
    align-items: center;
    gap: 5px;
    height: 26px;
    padding: 0 4px 1px 1px;
    background: #fff;
    border-right: 1px solid #999;
}

.search input {
    flex: 1;
    min-width: 0;
    height: 24px;
    padding: 0 2px;
    border: 1px solid #777;
}

.search input::placeholder {
    color: #757575;
}

.component-tree {
    padding-top: 1px;
}

.component-tree > li > ul {
    margin-left: 31px;
}

.component-tree .leaf span {
    margin-left: 6px;
}

.component-tree ul .leaf .ico {
    width: 14px;
    height: 14px;
}

.properties {
    position: relative;
    display: flex;
    flex: 1;
    flex-direction: column;
    align-items: flex-start;
    min-width: 0;
    padding-right: 7px;
}

.tab {
    position: relative;
    z-index: 1;
    height: 21px;
    padding: 0 6px 0 4px;
    border-right: 1px solid #dadada;
    background: #fff;
    line-height: 21px;
}

.sheet {
    display: flex;
    flex: 1;
    align-self: stretch;
    margin-top: -1px;
    padding: 3px 2px 2px 1px;
    border: 1px solid #d9d9d9;
    border-left: 0;
    background: #fff;
}

.table-box {
    display: flex;
    flex: 1;
    align-items: flex-start;
    border: 1px solid #a9abb0;
}

table {
    flex: 1;
    border-collapse: collapse;
    table-layout: fixed;
    width: 100%;
}

th,
td {
    height: 19px;
    padding: 0 0 0 2px;
    border: 1px solid #c0c0c0;
    border-top: 0;
    border-left: 0;
    font-weight: 400;
    line-height: 18px;
    text-align: left;
    white-space: nowrap;
}

th {
    height: 24px;
    padding: 0;
    background: linear-gradient(#fff, #ececec);
    text-align: center;
}

th.value {
    width: 124px;
    background: linear-gradient(#f8d69b, #f0bf62);
    color: #600050;
}

.no {
    width: 21px;
    padding: 0;
    background: linear-gradient(90deg, #fff, #ececec);
    font-family: "Liberation Sans", sans-serif;
    font-size: 11px;
    text-align: center;
}

.name {
    position: relative;
    width: 190px;
}

td.name {
    padding-left: 19px;
}

.key .name {
    color: #00f;
}

.dim .name,
.dim .value {
    color: #808080;
}

.current td {
    background: #d9e9f8;
}

.current .name {
    background: #0078d7;
    color: #fff;
}

.current .no {
    background: #ffd38c;
    color: #600050;
}

.expand {
    position: absolute;
    top: 3px;
    left: 2px;
    width: 13px;
    height: 13px;
    border: 1px solid #999;
    color: #000;
    font: 14px/10px "Liberation Sans", sans-serif;
}

.rebar {
    width: 11px;
    height: 11px;
    margin: 0 1px 0 0;
    vertical-align: -2px;
    fill: none;
    stroke: #000;
}

.scrollbar {
    display: flex;
    flex: none;
    flex-direction: column;
    align-self: stretch;
    align-items: center;
    width: 15px;
    background: #f0f0f0;
}

.scrollbar svg {
    width: 10px;
    height: 18px;
    fill: none;
    stroke: #505050;
    stroke-width: 2;
}

.thumb {
    width: 15px;
    height: 62%;
    margin-bottom: auto;
    background: #cdcdcd;
}

/* floating section editor */
.dialog {
    position: absolute;
    top: 20px;
    right: 22px;
    display: flex;
    flex-direction: column;
    width: 578px;
    padding: 0 6px 6px 5px;
    border: 1px solid #333;
    box-shadow: inset -1px -1px #5fd0ee;
    background: #b9d1ea;
}

.dialog h2 {
    height: 30px;
    margin: 1px -5px 0 -5px;
    padding: 3px 6px 0;
    background: linear-gradient(#99b4d1, #b9d1ea);
    line-height: 30px;
}

.dialog-body {
    display: flex;
    flex-direction: column;
    padding: 4px 4px 3px 5px;
    border: 1px solid #e0e0e0;
    background: #fff;
}

.dialog-tools {
    display: flex;
    flex: none;
    align-items: center;
    gap: 10px;
    height: 28px;
    padding-left: 4px;
    background: linear-gradient(#fdfdfd, #f4f4f4);
}

.grip {
    flex: none;
    width: 2px;
    height: 14px;
    margin-right: -5px;
    background: repeating-linear-gradient(#c0c0c0 0 2px, transparent 2px 4px);
}

.dialog-tools .sep {
    margin: 0 -2px;
}

.info {
    gap: 2px;
    margin-bottom: 1px;
    background: #f0f0f0;
    color: #808080;
}

.info .grip {
    margin-right: 3px;
}

.combo {
    display: flex;
    align-items: center;
    width: 133px;
    height: 23px;
    padding: 0 3px 0 1px;
    border: 1px solid #707070;
    font-family: "Noto Sans", sans-serif;
}

.canvas {
    overflow: hidden;
    border: 2px solid #f00;
    background: #000;
}

.canvas svg {
    display: block;
    fill: none;
}

.grid {
    stroke: #363636;
    stroke-dasharray: 14 3 3 3 3 3;
}

.axis {
    stroke: #5c5c5c;
}

.scale {
    fill: #4c4c4c;
    font: 11px "Liberation Sans", sans-serif;
}

.dims {
    stroke: #0f0;
}

.outline {
    stroke: #fff;
    stroke-width: 2;
}

.leader {
    stroke: #fff;
}

.stirrup {
    stroke: #f00;
    stroke-width: 3;
}

.corner-bar {
    stroke: #ff0;
}

.side-bar {
    stroke: #f0f;
}

.labels {
    fill: #fff;
    font: 16px "Liberation Serif", serif;
}

.cjk {
    font: 15px "Noto Sans CJK SC", sans-serif;
}

.green {
    fill: #0f0;
    font: 13px "Liberation Mono", monospace;
}

.dialog-status {
    display: flex;
    gap: 2px;
    height: 24px;
    padding: 3px 0 1px;
    background: #f0f0f0;
}

.dialog-status span {
    border: 1px solid #d7d7d7;
    background: linear-gradient(#fff, #f2f2f2);
    line-height: 18px;
}

.coords {
    width: 149px;
    padding-left: 8px;
    font-family: "Liberation Mono", monospace;
    font-size: 10px;
}

.rest {
    display: flex;
    flex: 1;
    align-items: flex-end;
    justify-content: flex-end;
}

.marker {
    position: absolute;
    top: 85px;
    left: 4px;
    width: 335px;
    height: 25px;
    border: 3px solid #f00;
    pointer-events: none;
}

/* status bar */
.statusbar {
    display: flex;
    flex: none;
    gap: 2px;
    height: 22px;
    padding-top: 2px;
    background: #f0f0f0;
}

.statusbar span {
    flex: none;
    padding-left: 1px;
    border: 1px solid #d7d7d7;
    border-bottom: 0;
    background: linear-gradient(#fff, #f4f4f4);
    line-height: 18px;
    white-space: nowrap;
}

.blank {
    width: 148px;
}

.height {
    width: 78px;
}

.base {
    width: 98px;
}

.count {
    width: 48px;
}

.statusbar .hint {
    flex: 1;
}

.statusbar .fps {
    width: 70px;
    font-family: "Liberation Mono", monospace;
    font-size: 10px;
}

/* taskbar */
.taskbar {
    display: flex;
    flex: none;
    height: 40px;
    background: #030d11;
    color: #fff;
}

.start {
    display: flex;
    align-items: center;
    justify-content: center;
    width: 48px;
}

.cortana {
    display: flex;
    align-items: center;
    gap: 6px;
    width: 344px;
    padding: 0 14px 0 8px;
    background: #333;
}

.cortana input {
    flex: 1;
    font-size: 14px;
    height: 24px;
    outline: 0;
}

.cortana input::placeholder {
    color: #999;
}

.apps {
    display: flex;
    gap: 1px;
    padding-left: 3px;
}

.apps button {
    display: flex;
    align-items: center;
    justify-content: center;
    width: 48px;
    height: 40px;
}

.apps svg {
    width: 24px;
    height: 24px;
    overflow: visible;
}

.apps .running {
    background: linear-gradient(#76b9ed, #76b9ed) bottom / 40px 2px no-repeat;
}

.apps .current {
    background-color: #333c40;
    background-size: 48px 2px;
}

.tray {
    display: flex;
    align-items: center;
    gap: 9px;
    margin-left: auto;
    padding-right: 15px;
}

.tray svg {
    fill: none;
    stroke: #fff;
}

.pair {
    margin-right: 10px;
    line-height: 17px;
    text-align: center;
}

.ime-lang {
    font-size: 14px;
}

.tray .sogou {
    margin: 0 7px 0 5px;
}

.tray .notice text {
    fill: #fff;
    stroke: none;
    font-size: 13px;
}

/* floating input bar and speed ball */
.ime {
    position: absolute;
    top: 19px;
    right: 253px;
    display: flex;
    align-items: center;
    gap: 7px;
    width: 181px;
    height: 24px;
    padding: 0 4px 0 0;
    border: 1px solid #a9c0e0;
    background: #fff;
    color: #2477c9;
    font-size: 15px;
    font-weight: 700;
}

.ime svg {
    flex: none;
}

.ime .ime-logo {
    margin: 0 -3px 0 -5px;
}

.boost {
    position: absolute;
    top: -28px;
    right: 212px;
    width: 47px;
    height: 47px;
    padding-top: 26px;
    border: 2px solid #ddd;
    border-radius: 50%;
    background: #3cc158;
    box-shadow: inset 0 0 0 1px #2a8a3f, 0 1px 4px #888;
    color: #fff;
    font-weight: 700;
    text-align: center;
}
</style>
